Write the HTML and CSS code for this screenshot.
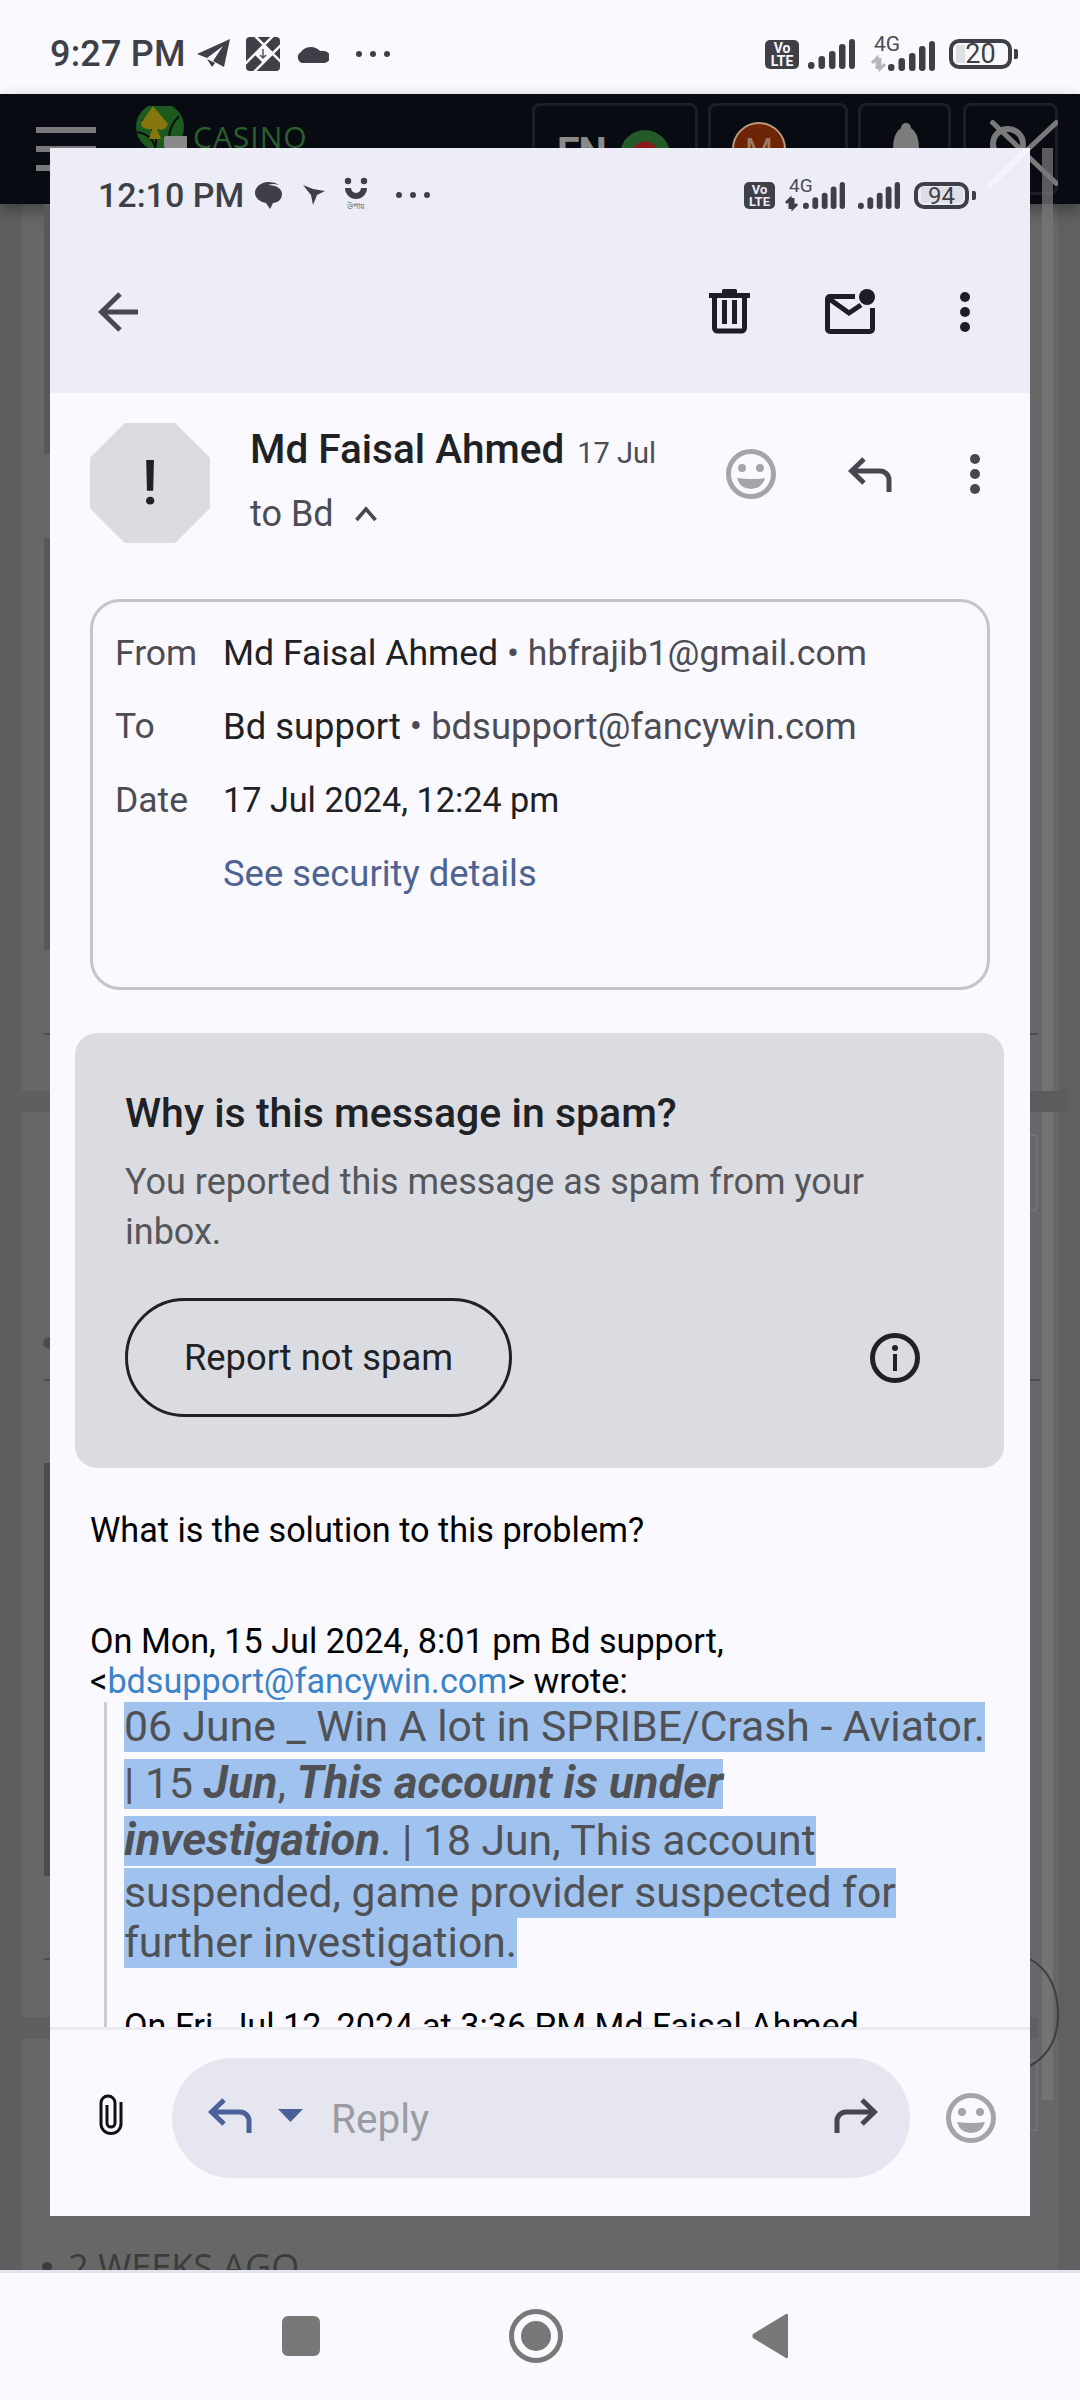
FILE: index.html
```html
<!doctype html>
<html>
<head>
<meta charset="utf-8">
<title>Screenshot of a screenshot</title>
<link rel="stylesheet" href="styles.css">
</head>
<body>

<svg class="defs" width="0" height="0">
	<symbol id="bars" viewBox="0 0 47 30">
		<rect x="0" y="23" width="6.5" height="7" rx="3"/>
		<rect x="10.5" y="17" width="6.5" height="13" rx="3"/>
		<rect x="21" y="12" width="6.5" height="18" rx="3"/>
		<rect x="31" y="5" width="6.5" height="25" rx="3"/>
		<rect x="41" y="0" width="6" height="30" rx="3"/>
	</symbol>
	<symbol id="smile" viewBox="0 0 50 50">
		<circle cx="25" cy="25" r="22.5" fill="none" stroke="#a4a5a9" stroke-width="5"/>
		<circle cx="16" cy="19" r="4" fill="#a4a5a9"/>
		<circle cx="34" cy="19" r="4" fill="#a4a5a9"/>
		<path d="M11 29 Q25 31 39 29 Q36 40 25 40 Q14 40 11 29Z" fill="#a4a5a9"/>
	</symbol>
	<symbol id="reply" viewBox="0 0 45 35">
		<path d="M16 2 L3.5 14 L16 26 M3.5 14 H32 a9 9 0 0 1 9 9 V35" fill="none" stroke="currentColor" stroke-width="5"/>
	</symbol>
	<symbol id="dots" viewBox="0 0 10 40">
		<circle cx="5" cy="5" r="5"/>
		<circle cx="5" cy="20" r="5"/>
		<circle cx="5" cy="35" r="5"/>
	</symbol>
</svg>

<div class="phone">

	<!-- phone status bar -->
	<div class="status status-out">
		<span class="time">9:27 PM</span>
		<svg class="ic-tg" width="34" height="30" viewBox="0 0 34 30"><path d="M1 15 L34 0 L28 28 L17 22 L27 7 L11 19Z"/><path d="M11 20 L16 28 L19 24Z"/></svg>
		<svg class="ic-dl" width="34" height="34" viewBox="0 0 34 34"><rect width="34" height="34" rx="4"/><path d="M9 -1 L35 25 M27 -1 L-1 27 M8 35 L35 8" stroke="#f9f9ff" stroke-width="2.5"/><path d="M17 8 L26 17 L17 26 L8 17Z" fill="#f9f9ff"/><path d="M17 12 V21 M14 18 L17 21 L20 18" stroke="#55565c" stroke-width="1.5" fill="none"/></svg>
		<svg class="ic-cloud" width="33" height="18" viewBox="0 0 33 18"><path d="M6 18 a6 6 0 0 1 -1 -11 a11 9 0 0 1 19 -1 a7 7 0 0 1 4 0 a6 6 0 0 1 0 12Z"/></svg>
		<span class="more"><i></i><i></i><i></i></span>
		<span class="spacer"></span>
		<span class="volte">Vo<br>LTE</span>
		<svg class="bars" width="47" height="30"><use href="#bars"/></svg>
		<svg class="net" width="66" height="36" viewBox="0 0 66 36"><text x="5" y="16" class="net-text">4G</text><path d="M3 28 L8 23 V34 M11 23 V34 L16 29" fill="none" stroke="#b6b7bc" stroke-width="3"/><use href="#bars" x="19" y="6" width="47" height="30"/></svg>
		<span class="batt batt-low">20</span>
		<span class="batt-tip"></span>
	</div>

	<!-- site behind the screenshot -->
	<div class="site">
		<div class="site-head">
			<span class="burger"><i></i><i></i><i></i></span>
			<svg class="logo" width="52" height="42" viewBox="0 0 52 42"><circle cx="25" cy="21" r="24" fill="#1c5a1e"/><path d="M7 14 Q25 26 20 42 M44 10 Q30 24 36 42 M2 26 Q16 28 20 40" stroke="#0a0c10" stroke-width="2" fill="none"/><path d="M18 0 L33 18 Q30 26 22 23 L26 33 L14 33 L17 23 Q6 24 6 17Z" fill="#85760f"/><rect x="29" y="30" width="25" height="12" rx="2" fill="#8a8a8a"/></svg>
			<span class="casino">CASINO</span>
			<span class="spacer"></span>
			<div class="hd-box hd-lang"><span class="hd-en">EN</span><span class="flag"></span></div>
			<div class="hd-box hd-user"><span class="avatar-m">M</span><svg width="24" height="14" viewBox="0 0 24 14"><path d="M1 1 L12 12 L23 1" stroke="#777" stroke-width="2" fill="none"/></svg></div>
			<div class="hd-box hd-bell"><svg width="30" height="50" viewBox="0 0 30 50"><path d="M15 0 a5 5 0 0 1 5 5 Q28 10 28 26 V50 H2 V26 Q2 10 10 5 a5 5 0 0 1 5 -5Z" fill="#7c7c7c"/></svg></div>
			<div class="hd-box hd-x"><svg width="68" height="66" viewBox="0 0 68 66"><circle cx="18" cy="24" r="15" fill="none" stroke="#7a7a7a" stroke-width="6"/><path d="M1 1 L68 65 M68 1 L34 33" stroke="#7a7a7a" stroke-width="5"/></svg></div>
		</div>
		<div class="site-body">
			<div class="weeks"><i></i>2 WEEKS AGO</div>
		</div>
	</div>

	<!-- nav bar -->
	<div class="nav">
		<span class="nav-square"></span>
		<span class="nav-home"><i></i></span>
		<svg class="nav-back" width="36" height="46" viewBox="0 0 36 46"><path d="M34 1 Q36 0 36 3 V43 Q36 46 34 45 L1 25 Q0 23 1 21Z"/></svg>
	</div>

	<!-- bits of the page that show on both sides of the screenshot -->
	<svg class="backdrop" width="1080" height="2400" viewBox="0 0 1080 2400">
		<rect x="1042" y="148" width="11" height="1952" fill="#76777a" opacity=".75"/>
		<rect x="44" y="204" width="6" height="250" fill="#56585b"/>
		<rect x="44" y="538" width="6" height="412" fill="#56585b"/>
		<rect x="44" y="1463" width="6" height="413" fill="#484b4f"/>
		<rect x="22" y="1091" width="28" height="21" fill="#5f5f60"/>
		<rect x="22" y="2017" width="28" height="22" fill="#5f5f60"/>
		<rect x="1030" y="1091" width="38" height="21" fill="#5c5c5e"/>
		<rect x="1030" y="2017" width="8" height="22" fill="#5f5f60"/>
		<path d="M44 1034 H50 M1030 1034 H1038 M44 1380 H50 M1030 1380 H1040 M44 1959 H50" stroke="#4e4e50" stroke-width="2"/>
		<ellipse cx="50" cy="1343" rx="7" ry="6" fill="#4c4c4e"/>
		<path d="M1030 1135 H1034 Q1037 1135 1037 1138 V1207 Q1037 1210 1034 1210 H1030 M1030 2060 H1034 Q1037 2060 1037 2063 V2130 H1030" fill="none" stroke="#737375" stroke-width="2"/>
		<path d="M1030 1959 Q1058 1975 1058 2015 Q1058 2050 1030 2066" fill="none" stroke="#3e3e40" stroke-width="2"/>
	</svg>

	<!-- the mail screenshot -->
	<div class="win">
		<div class="win-head">
			<div class="status status-in">
				<span class="time time-in">12:10 PM</span>
				<svg class="ic-bub" width="27" height="27" viewBox="0 0 27 27"><path d="M13 3 C22 3 27 7 27 12 C27 17 23 21 18 21 L15 27 L11 21 C5 20 0 16 0 11 C0 5 6 0 13 0 Q20 0 24 3 Q18 1 13 3Z"/></svg>
				<svg class="ic-bird" width="22" height="20" viewBox="0 0 22 20"><path d="M0 0 L10 4 L22 6 L14 10 L10 20 L8 10 Z"/></svg>
				<span class="ic-upay">
					<svg width="24" height="24" viewBox="0 0 24 24"><circle cx="4" cy="4" r="3.2"/><circle cx="20" cy="4" r="3.2"/><path d="M1 11 H7 a5 5 0 0 0 10 0 H23 a11 11 0 0 1 -22 0Z"/></svg>
					<span class="upay-text">উপায়</span>
				</span>
				<span class="more"><i></i><i></i><i></i></span>
				<span class="spacer"></span>
				<span class="volte volte-in">Vo<br>LTE</span>
				<svg class="net-in" width="62" height="30" viewBox="0 0 62 30"><text x="5" y="13" class="net-text net-text-in">4G</text><path d="M2 24 L6 20 V30 M9 19 V29 L13 25" fill="none" stroke="#3f3f48" stroke-width="3"/><use href="#bars" x="19" y="3" width="42" height="27"/></svg>
				<svg class="bars-in" width="42" height="27"><use href="#bars"/></svg>
				<span class="batt batt-in">94</span>
				<span class="batt-tip tip-in"></span>
			</div>
			<div class="toolbar">
				<svg width="40" height="40" viewBox="0 0 40 40"><path d="M22 2 L3.500 20 L22 38 M3.500 20 H40" fill="none" stroke="#47474f" stroke-width="5"/></svg>
				<span class="spacer"></span>
				<svg class="ic-trash" width="41" height="45" viewBox="0 0 41 45"><rect x="0" y="4" width="41" height="5"/><rect x="13" y="0" width="15" height="5" rx="1.500"/><path d="M5.500 8 V39 a3 3 0 0 0 3 3 H32.500 a3 3 0 0 0 3 -3 V8" fill="none" stroke="#1d1d25" stroke-width="5"/><rect x="13" y="11" width="5" height="24"/><rect x="23" y="11" width="5" height="24"/></svg>
				<svg class="ic-mail" width="50" height="45" viewBox="0 0 50 45"><path d="M30 7.500 H5 a2.500 2.500 0 0 0 -2.500 2.500 V40 a2.500 2.500 0 0 0 2.500 2.500 H45 a2.500 2.500 0 0 0 2.500 -2.500 V19" fill="none" stroke="#1d1d25" stroke-width="5"/><path d="M3 9 L24 24 L36 16" fill="none" stroke="#1d1d25" stroke-width="5"/><circle cx="42" cy="8" r="8"/></svg>
				<svg class="ic-dots" width="10" height="40"><use href="#dots"/></svg>
			</div>
		</div>

		<div class="scroll">
			<div class="sender">
				<div class="octagon">!</div>
				<div class="who">
					<div class="who-name"><span class="name">Md Faisal Ahmed</span> <span class="when">17 Jul</span></div>
					<div class="who-to">to Bd <svg width="22" height="16" viewBox="0 0 22 16"><path d="M1.500 14 L11 3 L20.500 14" fill="none" stroke="#47474f" stroke-width="3.500"/></svg></div>
				</div>
				<div class="who-actions">
					<svg class="act-smile" width="50" height="50"><use href="#smile"/></svg>
					<svg class="act-reply" width="45" height="35"><use href="#reply"/></svg>
					<svg class="act-dots" width="10" height="40"><use href="#dots"/></svg>
				</div>
			</div>

			<div class="details">
				<span class="lbl">From</span><span class="val val-from">Md Faisal Ahmed <em>• hbfrajib1@gmail.com</em></span>
				<span class="lbl">To</span><span class="val">Bd support <em>• bdsupport@fancywin.com</em></span>
				<span class="lbl">Date</span><span class="val val-date">17 Jul 2024, 12:24 pm</span>
				<span></span><span class="val sec">See security details</span>
			</div>

			<div class="spam">
				<div class="spam-title">Why is this message in spam?</div>
				<div class="spam-text">You reported this message as spam from your inbox.</div>
				<div class="spam-row">
					<div class="spam-btn">Report not spam</div>
					<svg width="50" height="50" viewBox="0 0 50 50"><circle cx="25" cy="25" r="22.500" fill="none" stroke="#202124" stroke-width="5"/><circle cx="25" cy="15" r="3"/><rect x="23" y="21" width="4" height="17"/></svg>
				</div>
			</div>

			<div class="mail">
				<p class="mail-q">What is the solution to this problem?</p>
				<p class="mail-on">On Mon, 15 Jul 2024, 8:01 pm Bd support,<br>&lt;<a href="#">bdsupport@fancywin.com</a>&gt; wrote:</p>
				<div class="quote">
					<div class="hl hl-gap">06 June _ Win A lot in SPRIBE/Crash - Aviator.</div>
					<div class="hl hl-gap">| 15 <b>Jun</b>, <b>This account is under</b></div>
					<div class="hl hl-gap2"><b>investigation</b>. | 18 Jun, This account</div>
					<div class="hl">suspended, game provider suspected for</div>
					<div class="hl">further investigation.</div>
					<p class="quote-on">On Fri, Jul 12, 2024 at 3:36 PM Md Faisal Ahmed</p>
				</div>
			</div>
		</div>

		<div class="reply-bar">
			<svg class="ic-clip" width="24" height="41" viewBox="0 0 24 41"><path d="M8 11 V29 a4 4 0 0 0 8 0 V9 a6.500 6.500 0 0 0 -14 0 V30 a10 9.500 0 0 0 20 0 V8" fill="none" stroke="#111" stroke-width="3"/></svg>
			<div class="reply-pill">
				<svg class="pill-reply" width="45" height="35"><use href="#reply"/></svg>
				<svg class="pill-caret" width="25" height="13" viewBox="0 0 25 13"><path d="M0 0 H25 L12.500 13Z"/></svg>
				<span class="pill-text">Reply</span>
				<span class="spacer"></span>
				<svg class="pill-fwd" width="45" height="35"><use href="#reply"/></svg>
			</div>
			<svg class="ic-smile" width="50" height="50"><use href="#smile"/></svg>
		</div>

		<svg class="x-ghost" width="42" height="40" viewBox="0 0 42 40"><path d="M0 39 L41 0" stroke="#f5f6fb" stroke-width="5"/></svg>
	</div>

</div>

</body>
</html>
```

FILE: styles.css
```css
*{ padding: 0; margin: 0; box-sizing: border-box; }
html, body{ width: 1080px; height: 2400px; overflow: hidden; }
body{ font-family: Roboto, "Noto Sans", sans-serif; background: #666; }
i{ font-style: normal; }
a{ text-decoration: none; }
svg{ display: block; flex: none; }
.defs{ position: absolute; }
.spacer{ flex: 1; }

.phone{ width: 1080px; height: 2400px; position: relative; display: flex; flex-direction: column; overflow: hidden; }

/* status bars */
.status{ height: 94px; background: #f9f9ff; display: flex; align-items: center; padding: 0 62px 0 50px; color: #3f3f48; fill: #3f3f48; flex: none; }
.status-out{ padding-top: 14px; }
.time{ font-size: 36px; font-weight: 500; letter-spacing: .2px; white-space: nowrap; }
.ic-tg{ margin-left: 10px; }
.ic-dl{ margin-left: 16px; }
.ic-cloud{ margin-left: 16px; }
.more{ display: flex; gap: 8px; margin-left: 27px; }
.more i{ width: 6px; height: 6px; border-radius: 50%; background: #3f3f48; }
.volte{ width: 34px; height: 29px; background: #3f3f48; color: #f9f9ff; border-radius: 5px; font-size: 14px; font-weight: 700; line-height: 13px; text-align: center; padding-top: 2px; }
.bars{ margin-left: 9px; }
.net{ margin-left: 14px; margin-bottom: 2px; overflow: visible; }
.net-text{ font-size: 21px; fill: #4b4b53; font-family: Roboto, sans-serif; }
.net-text-in{ font-size: 19px; }
.batt{ width: 63px; height: 30px; margin-left: 14px; border: 4px solid #3f3f48; border-radius: 10px; font-size: 27px; line-height: 23px; text-align: center; color: #3f3f48; background-repeat: no-repeat; background-image: linear-gradient(#dfe0e6, #dfe0e6); }
.batt-low{ background-size: 9px 18px; background-position: 3px center; }
.batt-tip{ width: 4px; height: 10px; margin-left: 2px; border-radius: 0 2px 2px 0; background: #3f3f48; }

.status-in{ height: 92px; background: none; padding: 2px 54px 0 48px; }
.time-in{ font-size: 34px; letter-spacing: 0; }
.ic-bub{ margin-left: 11px; }
.ic-bird{ margin-left: 21px; }
.ic-upay{ margin-left: 19px; width: 24px; display: flex; flex-direction: column; align-items: center; margin-top: -3px; }
.upay-text{ font-family: "Noto Sans", "DejaVu Sans", sans-serif; font-size: 8px; line-height: 9px; white-space: nowrap; }
.status-in .more{ margin-left: 28px; }
.volte-in{ width: 31px; height: 27px; font-size: 13px; line-height: 12px; background: #3f3f48; color: #ecedf6; }
.net-in{ margin-left: 9px; margin-top: -2px; overflow: visible; }
.bars-in{ margin-left: 12px; }
.batt-in{ width: 55px; height: 27px; margin-left: 14px; font-size: 24px; line-height: 20px; background-size: 42px 16px; background-position: center; }
.tip-in{ height: 9px; margin-left: 3px; }

/* site behind */
.site{ flex: 1; display: flex; flex-direction: column; min-height: 0; }
.site-head{ height: 110px; background: #080b12; display: flex; align-items: flex-start; padding: 9px 22px 0 36px; position: relative; box-shadow: 0 6px 14px rgba(0,0,0,.35); }
.burger{ width: 60px; display: flex; flex-direction: column; gap: 13px; margin-top: 24px; }
.burger i{ height: 6px; background: #7a7a7a; }
.logo{ margin-left: 39px; margin-top: 3px; }
.casino{ font-family: "Open Sans", sans-serif; font-size: 30px; line-height: 30px; letter-spacing: 1px; color: #2b5f2b; margin-left: 6px; margin-top: 19px; }
.hd-box{ height: 92px; border: 3px solid #1c1f25; border-radius: 8px; margin-left: 10px; display: flex; overflow: hidden; }
.hd-lang{ width: 166px; padding: 27px 0 0 22px; gap: 14px; }
.hd-en{ font-size: 40px; font-weight: 700; color: #8a8a8a; line-height: 40px; letter-spacing: -1px; }
.flag{ width: 50px; height: 50px; border-radius: 50%; background: radial-gradient(circle, #8c1a1a 0 13px, #245a28 14px); margin-top: -3px; }
.hd-user{ width: 140px; padding: 16px 0 0 21px; gap: 12px; }
.avatar-m{ width: 54px; height: 54px; border-radius: 50%; background: #6e2407; border: 2px solid #b9997e; color: #9c7a65; font-size: 32px; text-align: center; line-height: 50px; flex: none; }
.hd-user svg{ margin-top: 29px; }
.hd-bell{ width: 93px; padding: 17px 0 0 30px; }
.hd-x{ width: 95px; margin-left: 12px; padding: 14px 0 0 24px; overflow: visible; border-width: 3px; }

.site-body{ flex: 1; display: flex; flex-direction: column; justify-content: flex-end; overflow: hidden; background: linear-gradient(90deg, #5e5f61 0 22px, #676767 22px 1058px, #5f6061 1058px); }
.weeks{ font-family: "Open Sans", sans-serif; font-size: 36px; line-height: 40px; color: #3c3c3c; display: flex; align-items: center; gap: 16px; padding-left: 42px; margin-bottom: -17px; }
.weeks i{ width: 10px; height: 10px; border-radius: 50%; background: #3c3c3c; }

/* nav */
.nav{ height: 130px; flex: none; background: #f9f9ff; border-top: 3px solid #e4e4ee; display: flex; align-items: center; padding: 0 0 2px 282px; fill: #787878; }
.nav-square{ width: 38px; height: 40px; background: #787878; border-radius: 6px; }
.nav-home{ width: 54px; height: 54px; margin-left: 189px; border: 5px solid #787878; border-radius: 50%; display: flex; align-items: center; justify-content: center; }
.nav-home i{ width: 30px; height: 30px; border-radius: 50%; background: #787878; }
.nav-back{ margin-left: 189px; }

.backdrop{ position: absolute; top: 0; left: 0; }

/* mail screenshot */
.win{ position: absolute; left: 50px; top: 148px; width: 980px; height: 2068px; background: #f9f9ff; display: flex; flex-direction: column; }
.x-ghost{ position: absolute; right: 0; top: 0; }
.win-head{ height: 245px; flex: none; background: #ecedf6; }
.toolbar{ height: 153px; display: flex; align-items: center; padding: 0 60px 10px 48px; fill: #1d1d25; }
.ic-mail{ margin-left: 75px; }
.ic-dots{ margin-left: 85px; }

.scroll{ flex: 1; min-height: 0; overflow: hidden; }

.sender{ height: 206px; display: flex; padding: 30px 0 0 40px; }
.octagon{ width: 120px; height: 120px; flex: none; background: #dbdce1; clip-path: polygon(29% 0, 71% 0, 100% 29%, 100% 71%, 71% 100%, 29% 100%, 0 71%, 0 29%); font-size: 62px; font-weight: 500; line-height: 120px; text-align: center; color: #202124; }
.who{ margin-left: 40px; }
.who-name{ height: 50px; line-height: 52px; white-space: nowrap; }
.name{ font-size: 40.5px; font-weight: 500; color: #202124; }
.when{ font-size: 29px; color: #4c4c54; margin-left: 9px; }
.who-to{ display: flex; align-items: center; gap: 21px; font-size: 36px; color: #4c4c54; height: 46px; margin-top: 18px; }
.who-actions{ margin: 0 50px 0 auto; width: 254px; height: 102px; display: flex; align-items: center; flex: none; fill: #47474f; color: #47474f; }
.act-reply{ margin-left: 72px; }
.act-dots{ margin-left: 77px; }

.details{ margin: 0 40px; height: 391px; border: 3px solid #c4c5cc; border-radius: 30px; padding: 14px 0 0 22px; display: grid; grid-template-columns: 108px 1fr; grid-auto-rows: 73.5px; align-items: center; font-size: 35.5px; }
.lbl{ color: #4c4c54; }
.val{ color: #202124; white-space: nowrap; font-size: 36.4px; }
.val-from{ font-size: 35.6px; }
.val-date{ font-size: 34.2px; }
.val em{ font-style: normal; color: #4c4c54; }
.sec{ color: #4e6391; }

.spam{ margin: 43px 26px 0 25px; height: 435px; background: #dbdce1; border-radius: 22px; padding: 55px 84px 0 50px; }
.spam-title{ font-size: 41px; font-weight: 500; line-height: 50px; color: #202124; white-space: nowrap; }
.spam-text{ margin-top: 20px; font-size: 36px; line-height: 49.5px; color: #55565c; }
.spam-row{ margin-top: 41px; display: flex; align-items: center; justify-content: space-between; fill: #202124; }
.spam-btn{ width: 387px; height: 119px; border: 3px solid #202124; border-radius: 60px; font-size: 36.3px; line-height: 113px; text-align: center; color: #202124; }

.mail{ padding: 42px 0 0 40px; font-size: 34.2px; line-height: 40px; color: #000; }
.mail-on{ margin-top: 71px; }
.mail-on a{ color: #3b82c8; }
.quote{ margin: 1px 0 0 14px; padding-left: 17px; border-left: 3px solid #ccc; }
.hl{ width: fit-content; height: 50px; line-height: 48px; font-size: 42.7px; color: #505155; background: #a0c2ee; white-space: nowrap; }
.hl b{ font-style: italic; font-size: 45.4px; line-height: 40px; }
.hl-gap{ margin-bottom: 7px; }
.hl-gap2{ margin-bottom: 2px; }
.quote-on{ margin-top: 38px; white-space: nowrap; }

.reply-bar{ height: 189px; flex: none; background: #f9f9ff; border-top: 3px solid #ebebf2; display: flex; align-items: flex-start; padding: 28px 0 0 49px; }
.ic-clip{ margin-top: 36px; }
.reply-pill{ width: 738px; height: 120px; margin-left: 49px; border-radius: 60px; background: #e5e6f0; display: flex; align-items: center; padding: 0 32px 0 36px; }
.pill-reply{ color: #4a6199; margin-bottom: 6px; }
.pill-caret{ margin-left: 25px; margin-bottom: 6px; fill: #4a6199; }
.pill-text{ margin-left: 28px; font-size: 40.5px; color: #9a9ba3; margin-top: 2px; }
.pill-fwd{ color: #45464f; transform: scaleX(-1); margin-bottom: 6px; }
.ic-smile{ margin: 35px 0 0 36px; }
```
